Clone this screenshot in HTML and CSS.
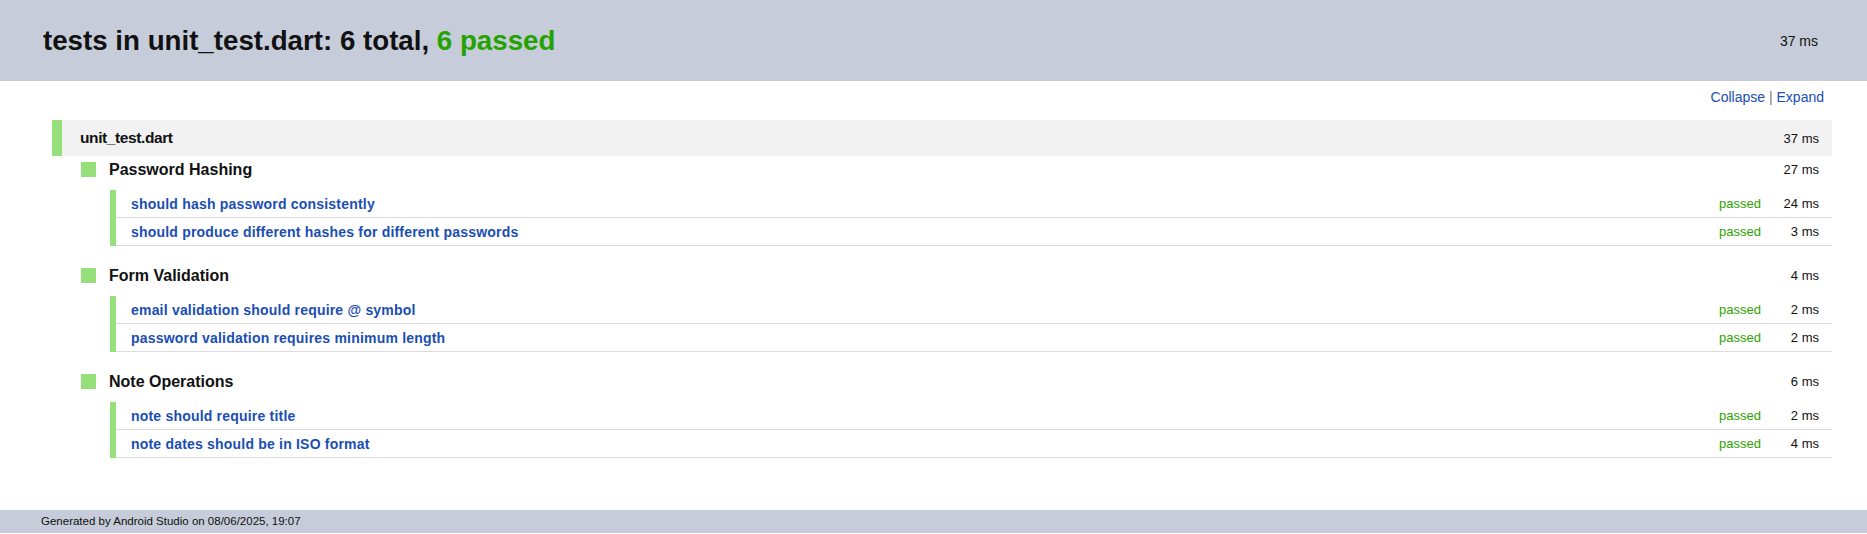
FILE: index.html
```html
<!DOCTYPE html>
<html>
<head>
<meta charset="utf-8">
<title>Test results</title>
<link rel="stylesheet" href="styles.css">
</head>
<body>
<header class="top">
  <h1 class="title">tests in unit_test.dart: 6 total, <span class="ok">6 passed</span></h1>
  <span class="ms ms-top">37 ms</span>
</header>
<main class="main">
  <div class="toolbar"><a class="link">Collapse</a> <span class="sep">|</span> <a class="link">Expand</a></div>
  <div class="file">
    <span class="file-name">unit_test.dart</span>
    <span class="ms">37 ms</span>
  </div>

  <section class="group">
    <div class="group-head">
      <span class="square"></span>
      <span class="group-name">Password Hashing</span>
      <span class="ms">27 ms</span>
    </div>
    <div class="tests">
      <div class="test"><span class="test-name">should hash password consistently</span><span class="status">passed</span><span class="ms dur">24 ms</span></div>
      <div class="test"><span class="test-name">should produce different hashes for different passwords</span><span class="status">passed</span><span class="ms dur">3 ms</span></div>
    </div>
  </section>

  <section class="group">
    <div class="group-head">
      <span class="square"></span>
      <span class="group-name">Form Validation</span>
      <span class="ms">4 ms</span>
    </div>
    <div class="tests">
      <div class="test"><span class="test-name">email validation should require @ symbol</span><span class="status">passed</span><span class="ms dur">2 ms</span></div>
      <div class="test"><span class="test-name">password validation requires minimum length</span><span class="status">passed</span><span class="ms dur">2 ms</span></div>
    </div>
  </section>

  <section class="group">
    <div class="group-head">
      <span class="square"></span>
      <span class="group-name">Note Operations</span>
      <span class="ms">6 ms</span>
    </div>
    <div class="tests">
      <div class="test"><span class="test-name">note should require title</span><span class="status">passed</span><span class="ms dur">2 ms</span></div>
      <div class="test"><span class="test-name">note dates should be in ISO format</span><span class="status">passed</span><span class="ms dur">4 ms</span></div>
    </div>
  </section>
</main>
<footer class="footer">Generated by Android Studio on 08/06/2025, 19:07</footer>
</body>
</html>
```
FILE: styles.css
```css
html, body {
  margin: 0;
  padding: 0;
}
body {
  font-family: "Liberation Sans", Arial, sans-serif;
  color: #111;
  background: #fff;
}
.top {
  height: 81px;
  background: #c6ccd9;
  display: flex;
  align-items: center;
  justify-content: space-between;
  padding: 0 49px 0 43px;
  box-sizing: border-box;
}
.title {
  margin: 0;
  font-size: 27.7px;
  font-weight: bold;
  color: #111;
}
.ok {
  color: #24a200;
}
.ms {
  font-size: 13px;
  color: #111;
}
.ms-top {
  font-size: 14px;
}
.main {
  padding: 0 35px 36px 0;
}
.toolbar {
  text-align: right;
  padding: 8px 8px 0 0;
  height: 17px;
  line-height: 17px;
  font-size: 14px;
  margin-bottom: 14px;
}
.link {
  color: #1a4eb3;
  cursor: pointer;
}
.sep {
  color: #777;
}
.file {
  margin-left: 52px;
  height: 36px;
  background: #f2f2f2;
  border-left: 10px solid #96e07c;
  display: flex;
  align-items: center;
  padding: 0 13px 0 18px;
}
.file-name {
  flex: 1;
  font-size: 15.5px;
  letter-spacing: -0.4px;
  font-weight: bold;
}
.group {
  margin-left: 81px;
  margin-bottom: 16px;
}
.group-head {
  display: flex;
  align-items: center;
  height: 15px;
  padding: 6px 13px 13px 0;
}
.square {
  width: 15px;
  height: 15px;
  background: #96e07c;
  margin-right: 13px;
}
.group-name {
  flex: 1;
  font-size: 16px;
  font-weight: bold;
}
.tests {
  margin-left: 29px;
  border-left: 6px solid #96e07c;
}
.test {
  display: flex;
  align-items: center;
  height: 27px;
  border-bottom: 1px solid #dcdcdc;
  padding: 0 13px 0 15px;
}
.test-name {
  flex: 1;
  font-size: 14px;
  font-weight: bold;
  letter-spacing: 0.2px;
  color: #1a4eb3;
}
.status {
  font-size: 13px;
  color: #2ca400;
}
.dur {
  width: 58px;
  text-align: right;
}
.footer {
  height: 23px;
  line-height: 23px;
  background: #c6ccd9;
  padding-left: 41px;
  font-size: 11.5px;
  color: #111;
}
```
